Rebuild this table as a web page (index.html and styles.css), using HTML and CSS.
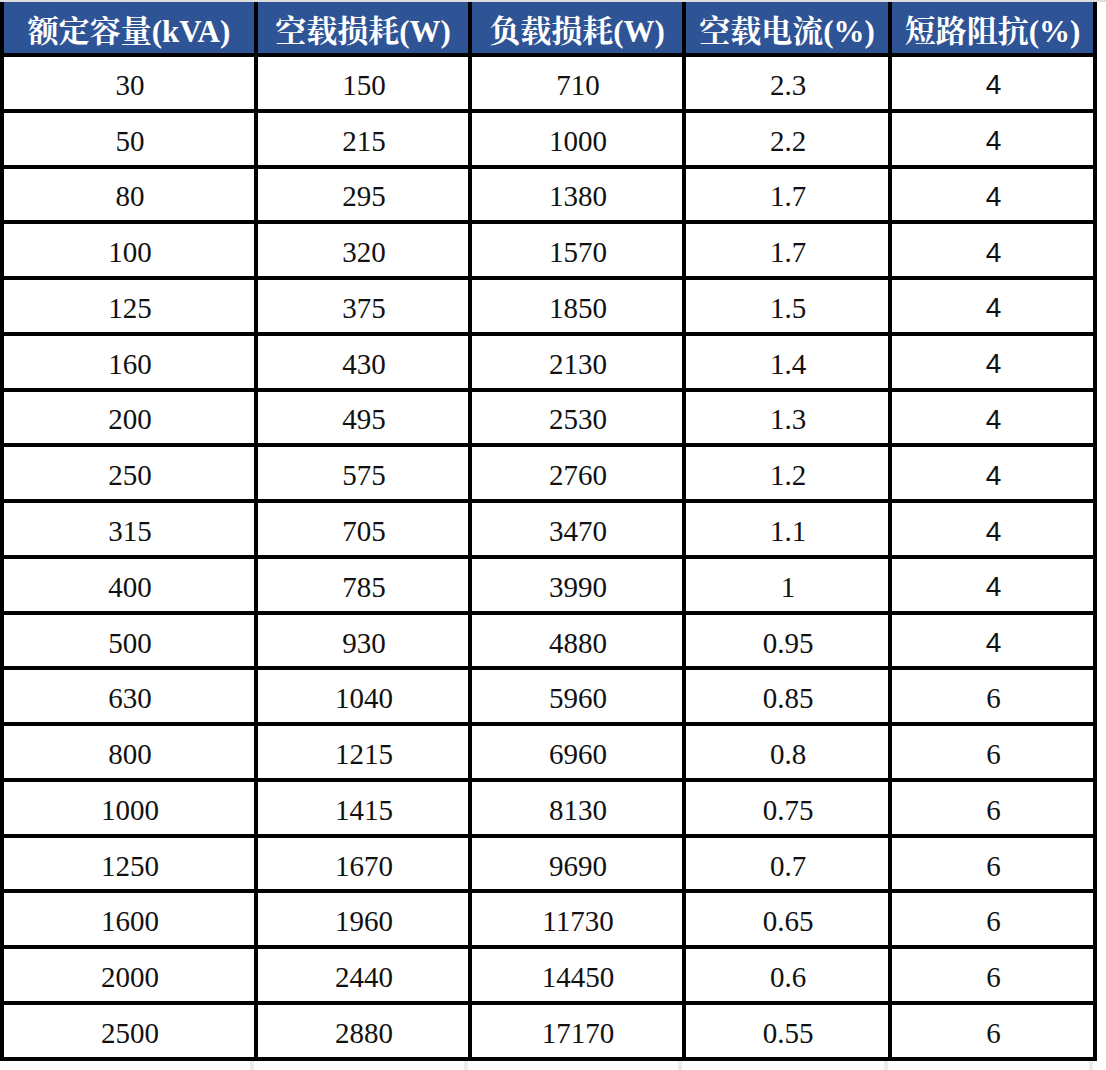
FILE: index.html
```html
<!DOCTYPE html>
<html lang="zh-CN">
<head>
<meta charset="utf-8">
<title>变压器参数表</title>
<link rel="stylesheet" href="styles.css">
</head>
<body>
<div class="sheet">
  <div class="table">
    <div class="th">额定容量(kVA)</div>
    <div class="th">空载损耗(W)</div>
    <div class="th">负载损耗(W)</div>
    <div class="th">空载电流(%)</div>
    <div class="th">短路阻抗(%)</div>

    <div class="td">30</div><div class="td">150</div><div class="td">710</div><div class="td">2.3</div><div class="td sans">4</div>
    <div class="td">50</div><div class="td">215</div><div class="td">1000</div><div class="td">2.2</div><div class="td sans">4</div>
    <div class="td">80</div><div class="td">295</div><div class="td">1380</div><div class="td">1.7</div><div class="td sans">4</div>
    <div class="td">100</div><div class="td">320</div><div class="td">1570</div><div class="td">1.7</div><div class="td sans">4</div>
    <div class="td">125</div><div class="td">375</div><div class="td">1850</div><div class="td">1.5</div><div class="td sans">4</div>
    <div class="td">160</div><div class="td">430</div><div class="td">2130</div><div class="td">1.4</div><div class="td sans">4</div>
    <div class="td">200</div><div class="td">495</div><div class="td">2530</div><div class="td">1.3</div><div class="td sans">4</div>
    <div class="td">250</div><div class="td">575</div><div class="td">2760</div><div class="td">1.2</div><div class="td sans">4</div>
    <div class="td">315</div><div class="td">705</div><div class="td">3470</div><div class="td">1.1</div><div class="td sans">4</div>
    <div class="td">400</div><div class="td">785</div><div class="td">3990</div><div class="td">1</div><div class="td sans">4</div>
    <div class="td">500</div><div class="td">930</div><div class="td">4880</div><div class="td">0.95</div><div class="td sans">4</div>
    <div class="td">630</div><div class="td">1040</div><div class="td">5960</div><div class="td">0.85</div><div class="td">6</div>
    <div class="td">800</div><div class="td">1215</div><div class="td">6960</div><div class="td">0.8</div><div class="td">6</div>
    <div class="td">1000</div><div class="td">1415</div><div class="td">8130</div><div class="td">0.75</div><div class="td">6</div>
    <div class="td">1250</div><div class="td">1670</div><div class="td">9690</div><div class="td">0.7</div><div class="td">6</div>
    <div class="td">1600</div><div class="td">1960</div><div class="td">11730</div><div class="td">0.65</div><div class="td">6</div>
    <div class="td">2000</div><div class="td">2440</div><div class="td">14450</div><div class="td">0.6</div><div class="td">6</div>
    <div class="td">2500</div><div class="td">2880</div><div class="td">17170</div><div class="td">0.55</div><div class="td">6</div>
  </div>
  <div class="ghost">
    <div class="gc"></div><div class="gc"></div><div class="gc"></div><div class="gc"></div><div class="gc"></div>
  </div>
</div>
</body>
</html>
```

FILE: styles.css
```css
html, body {
  margin: 0;
  padding: 0;
  background: #ffffff;
}

body {
  border-top: 2px solid #dedede;
  width: 1106px;
  height: 1068px;
  overflow: hidden;
}

.sheet {
  display: flex;
  flex-direction: column;
}

.table {
  display: grid;
  width: 1097px;
  box-sizing: border-box;
  grid-template-columns: 250px 210px 210px 202px 201px;
  grid-template-rows: 51px repeat(18, 51.78px);
  column-gap: 4px;
  row-gap: 4px;
  padding: 0 4px 4px 4px;
  background: #000000;
}

.th {
  background: #2f5496;
  color: #ffffff;
  font-family: "Liberation Serif", "Noto Serif CJK SC", "Noto Sans CJK SC", serif;
  font-weight: bold;
  font-size: 31px;
  display: flex;
  align-items: center;
  justify-content: center;
  white-space: nowrap;
  padding-top: 1px;
  box-sizing: border-box;
}

.td {
  background: #ffffff;
  color: #111111;
  font-family: "Liberation Serif", "Times New Roman", serif;
  font-size: 29px;
  display: flex;
  align-items: center;
  justify-content: center;
  padding-top: 5px;
  padding-left: 2px;
  box-sizing: border-box;
}

.td.sans {
  font-family: "Liberation Sans", Arial, sans-serif;
  font-size: 28px;
}

.ghost {
  display: grid;
  width: 1101px;
  grid-template-columns: 254px 214px 214px 206px 205px;
  height: 20px;
}

.gc {
  border-right: 4px solid #ececec;
}
```
